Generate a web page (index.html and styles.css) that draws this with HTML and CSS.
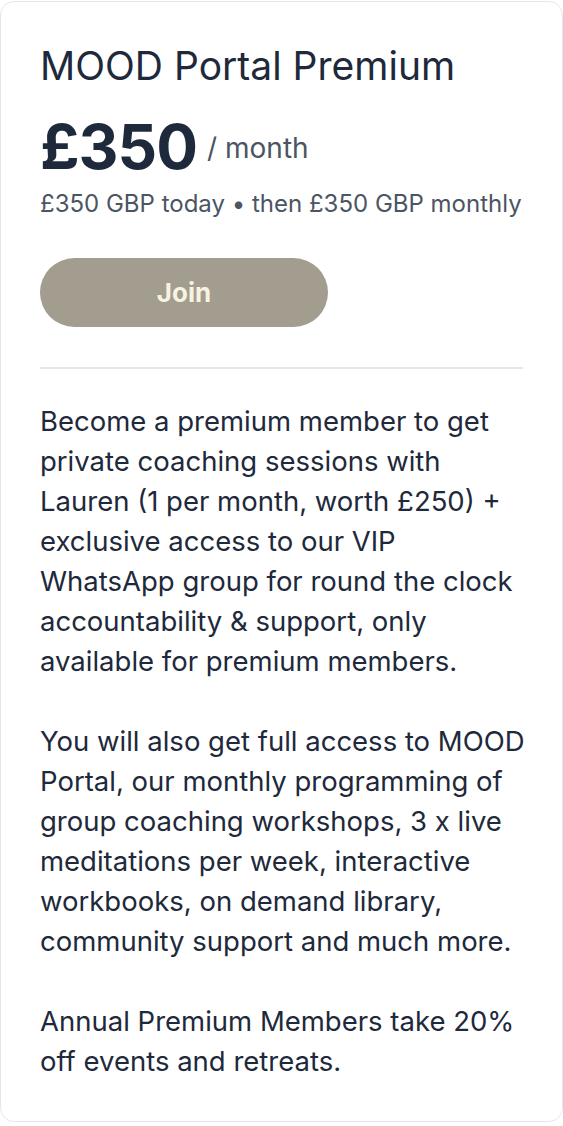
FILE: index.html
```html
<!DOCTYPE html>
<html>
<head>
<meta charset="utf-8">
<link rel="stylesheet" href="styles.css">
</head>
<body>
<div class="card">
  <h1 class="title">MOOD Portal Premium</h1>
  <div class="price-row">
    <span class="price">£350</span>
    <span class="period">/ month</span>
  </div>
  <p class="billing">£350 GBP today • then £350 GBP monthly</p>
  <button class="join">Join</button>
  <hr class="divider">
  <div class="desc">
    <p>Become a premium member to get private coaching sessions with Lauren (1 per month, worth £250) + exclusive access to our VIP WhatsApp group for round the clock accountability &amp; support, only available for premium members.</p>
    <p>You will also get full access to MOOD Portal, our monthly programming of group coaching workshops, 3 x live meditations per week, interactive workbooks, on demand library, community support and much more.</p>
    <p>Annual Premium Members take 20% off events and retreats.</p>
  </div>
</div>
</body>
</html>
```
FILE: styles.css
```css
* { box-sizing: border-box; }
html, body { margin: 0; padding: 0; background: #fff; }
body { font-family: Inter, "Noto Sans", sans-serif; color: #1e293b; }
.card {
  width: 563px;
  margin-top: 1px;
  border: 1px solid #e5e7eb;
  border-radius: 14px;
  padding: 40px 39px 40px 39px;
  min-height: 1121px;
}
.title { margin: 0; font-size: 39px; font-weight: 400; line-height: 48px; color: #1e293b; }
.price-row { display: flex; align-items: flex-end; gap: 10px; margin-top: 21px; }
.price { font-size: 62px; font-weight: 700; line-height: 72px; letter-spacing: -1px; color: #1e293b; }
.period { font-size: 28px; line-height: 34px; padding-bottom: 18px; color: #4b5563; }
.billing { margin: 6px 0 0; font-size: 24px; line-height: 30px; color: #4b5563; }
.join {
  display: block;
  margin-top: 39px;
  width: 288px;
  height: 69px;
  border: 0;
  border-radius: 35px;
  background: #a29d8f;
  color: #f8f3e1;
  font-family: Inter, sans-serif;
  font-size: 26px;
  font-weight: 700;
}
.divider { border: 0; border-top: 2px solid #e5e7eb; margin: 40px 0 0; }
.desc { margin-top: 32px; margin-right: -5px; font-size: 27.5px; line-height: 40px; color: #1e293b; }
.desc p { margin: 0 0 40px; }
.desc p:last-child { margin-bottom: 0; }
```
